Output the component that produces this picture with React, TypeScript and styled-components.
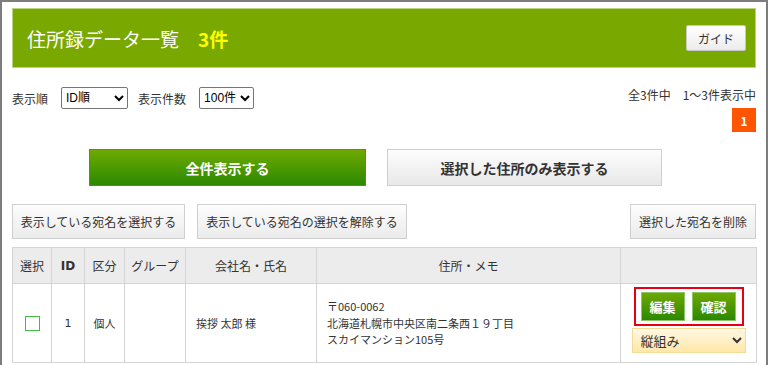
import styled, { createGlobalStyle } from "styled-components";

const GlobalStyle = createGlobalStyle`
  html, body {
    margin: 0;
    padding: 0;
    background: #fff;
  }
  body {
    font-family: "Noto Sans CJK JP", "Noto Sans", sans-serif;
    color: #333;
    font-size: 12px;
  }
`;

const Frame = styled.div`
  box-sizing: border-box;
  width: 768px;
  height: 365px;
  overflow: hidden;
  border: 2px solid #7d7d7d;
  border-bottom: none;
  padding: 6px 10px 0;
`;

const Header = styled.div`
  box-sizing: border-box;
  height: 60px;
  display: flex;
  align-items: center;
  padding: 0 9px 0 14px;
  background: #79a800;
  border: 1px solid #b9d67a;
`;

const Title = styled.h1`
  margin: 0;
  font-size: 19px;
  font-weight: normal;
  color: #fff;
  line-height: 1;
`;

const Count = styled.span`
  margin-left: 19px;
  color: #ffff00;
  font-weight: bold;
`;

const GuideButton = styled.button`
  margin-left: auto;
  width: 60px;
  height: 26px;
  font-family: inherit;
  font-size: 12px;
  color: #333;
  background: linear-gradient(#ffffff, #ececec);
  border: 1px solid #c8c8c8;
  border-radius: 2px;
  padding: 0;
`;

const ControlsRow = styled.div`
  display: flex;
  justify-content: space-between;
  align-items: flex-start;
  margin-top: 19px;
`;

const Filters = styled.div`
  display: flex;
  align-items: center;
  height: 22px;
`;

const Label = styled.span`
  font-size: 12px;
  margin-right: 13px;
`;

const Select = styled.select<{ $w: number; $gapAfter?: number }>`
  box-sizing: border-box;
  width: ${(p) => p.$w}px;
  height: 22px;
  margin-right: ${(p) => p.$gapAfter ?? 0}px;
  font-family: "Liberation Sans", "Noto Sans CJK JP", sans-serif;
  font-size: 12px;
  color: #000;
  background: #fff;
  border: 1px solid #767676;
  border-radius: 2px;
  padding: 0;
`;

const Summary = styled.div`
  display: flex;
  flex-direction: column;
  align-items: flex-end;
`;

const SummaryText = styled.div`
  font-size: 12px;
  line-height: 16px;
  white-space: pre;
`;

const PageBox = styled.div`
  margin-top: 5px;
  width: 24px;
  height: 24px;
  display: flex;
  align-items: center;
  justify-content: center;
  background: #ff5500;
  color: #fff;
  font-weight: bold;
  font-size: 12px;
`;

const BigButtons = styled.div`
  display: flex;
  gap: 21px;
  margin-top: 17px;
  padding-left: 77px;
`;

const BigButton = styled.button<{ $primary?: boolean; $w: number }>`
  box-sizing: border-box;
  width: ${(p) => p.$w}px;
  height: 37px;
  font-family: inherit;
  font-size: 14px;
  font-weight: bold;
  padding: 0;
  border-radius: 0;
  color: ${(p) => (p.$primary ? "#fff" : "#333")};
  background: ${(p) =>
    p.$primary
      ? "linear-gradient(#6eaa00, #2b8900)"
      : "linear-gradient(#fdfdfd, #e8e8e8)"};
  border: 1px solid ${(p) => (p.$primary ? "#4a9a00" : "#cfcfcf")};
`;

const ToolRow = styled.div`
  display: flex;
  gap: 12px;
  margin-top: 18px;
`;

const ToolButton = styled.button<{ $push?: boolean; $w: number }>`
  box-sizing: border-box;
  width: ${(p) => p.$w}px;
  height: 35px;
  padding: 0;
  margin-left: ${(p) => (p.$push ? "auto" : "0")};
  font-family: inherit;
  font-size: 12px;
  color: #333;
  background: linear-gradient(#fdfdfd, #ebebeb);
  border: 1px solid #cfcfcf;
  border-radius: 0;
  white-space: nowrap;
`;

const Table = styled.table`
  margin-top: 8px;
  width: 744px;
  table-layout: fixed;
  border-collapse: collapse;
  font-size: 12px;
`;

const Th = styled.th<{ $bold?: boolean }>`
  height: 35px;
  padding: 0;
  background: #ececec;
  border: 1px solid #d4d4d4;
  font-weight: ${(p) => (p.$bold ? "bold" : "normal")};
  font-family: ${(p) =>
    p.$bold ? '"DejaVu Sans", "Noto Sans CJK JP", sans-serif' : "inherit"};
  text-align: center;
`;

const Td = styled.td<{ $left?: boolean }>`
  height: 78px;
  padding: ${(p) => (p.$left ? "0 10px" : "0")};
  border: 1px solid #d4d4d4;
  font-size: 11px;
  text-align: ${(p) => (p.$left ? "left" : "center")};
  vertical-align: middle;
  white-space: nowrap;
`;

const IdCell = styled(Td)`
  font-family: "DejaVu Sans", sans-serif;
  font-size: 11px;
`;

const ActionCell = styled.td`
  border: 1px solid #d4d4d4;
  padding: 3px 0 9px;
  vertical-align: top;
`;

const Check = styled.div`
  width: 15px;
  height: 15px;
  margin: 0 auto;
  box-sizing: border-box;
  border: 1px solid #44bb44;
  background: #fff;
`;

const Address = styled.div`
  line-height: 16.5px;
  font-size: 11px;
`;

const ActionBox = styled.div`
  box-sizing: border-box;
  width: 110px;
  height: 39px;
  margin: 0 auto;
  border: 2px solid #e60012;
  display: flex;
  gap: 7px;
  padding: 3px 5px;
`;

const ActionButton = styled.button`
  box-sizing: border-box;
  width: 44px;
  height: 29px;
  padding: 0;
  font-family: inherit;
  font-size: 13px;
  font-weight: bold;
  color: #fff;
  background: linear-gradient(#6ea800, #2c8800);
  border: 1px solid #8cc56a;
  border-radius: 0;
`;

const LayoutSelect = styled.select`
  display: block;
  box-sizing: border-box;
  width: 114px;
  height: 25px;
  margin: 2px auto 0;
  font-family: inherit;
  font-size: 13px;
  color: #333;
  padding: 0 4px;
  background: linear-gradient(#fff8e3, #ffe7a8);
  border: 1px solid #f2dc98;
  border-radius: 0;
`;

const columns = [39, 33, 40, 61, 131, 304, 136];

export default function App() {
  return (
    <>
      <GlobalStyle />
      <Frame>
        <Header>
          <Title>
            住所録データ一覧<Count>3件</Count>
          </Title>
          <GuideButton>ガイド</GuideButton>
        </Header>

        <ControlsRow>
          <Filters>
            <Label>表示順</Label>
            <Select $w={67} $gapAfter={10} defaultValue="id">
              <option value="id">ID順</option>
            </Select>
            <Label>表示件数</Label>
            <Select $w={55} defaultValue="100">
              <option value="100">100件</option>
            </Select>
          </Filters>
          <Summary>
            <SummaryText>全3件中　1〜3件表示中</SummaryText>
            <PageBox>1</PageBox>
          </Summary>
        </ControlsRow>

        <BigButtons>
          <BigButton $primary $w={277}>全件表示する</BigButton>
          <BigButton $w={275}>選択した住所のみ表示する</BigButton>
        </BigButtons>

        <ToolRow>
          <ToolButton $w={173}>表示している宛名を選択する</ToolButton>
          <ToolButton $w={210}>表示している宛名の選択を解除する</ToolButton>
          <ToolButton $w={126} $push>選択した宛名を削除</ToolButton>
        </ToolRow>

        <Table>
          <colgroup>
            {columns.map((w, i) => (
              <col key={i} style={{ width: w }} />
            ))}
          </colgroup>
          <thead>
            <tr>
              <Th>選択</Th>
              <Th $bold>ID</Th>
              <Th>区分</Th>
              <Th>グループ</Th>
              <Th>会社名・氏名</Th>
              <Th>住所・メモ</Th>
              <Th></Th>
            </tr>
          </thead>
          <tbody>
            <tr>
              <Td>
                <Check />
              </Td>
              <IdCell>1</IdCell>
              <Td>個人</Td>
              <Td></Td>
              <Td $left>挨拶 太郎 様</Td>
              <Td $left>
                <Address>
                  〒060-0062
                  <br />
                  北海道札幌市中央区南二条西１９丁目
                  <br />
                  スカイマンション105号
                </Address>
              </Td>
              <ActionCell>
                <ActionBox>
                  <ActionButton>編集</ActionButton>
                  <ActionButton>確認</ActionButton>
                </ActionBox>
                <LayoutSelect defaultValue="v">
                  <option value="v">縦組み</option>
                </LayoutSelect>
              </ActionCell>
            </tr>
          </tbody>
        </Table>
      </Frame>
    </>
  );
}
